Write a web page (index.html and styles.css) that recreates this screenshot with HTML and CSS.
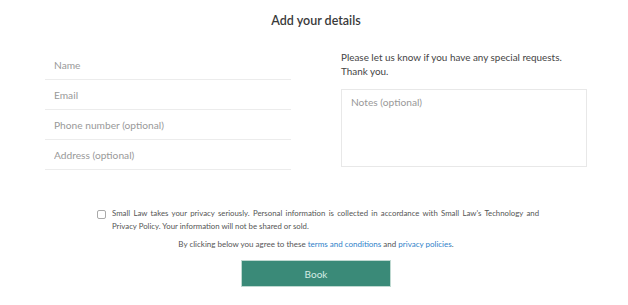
FILE: index.html
```html
<!DOCTYPE html>
<html lang="en">
<head>
    <meta charset="UTF-8">
    <meta name="viewport" content="width=device-width, initial-scale=1.0">
    <title>Add your details</title>
    <link rel="stylesheet" href="styles.css">
</head>
<body>

<div class="page">
    <h1 class="title">Add your details</h1>

    <div class="form-grid">
        <div class="fields">
            <input type="text" class="field" placeholder="Name">
            <input type="text" class="field" placeholder="Email">
            <input type="text" class="field" placeholder="Phone number (optional)">
            <input type="text" class="field" placeholder="Address (optional)">
        </div>
        <div class="notes">
            <p class="notes-intro">Please let us know if you have any special requests. Thank you.</p>
            <textarea class="notes-box" placeholder="Notes (optional)"></textarea>
        </div>
    </div>

    <label class="privacy">
        <input type="checkbox" class="privacy-check">
        <span class="privacy-text">Small Law takes your privacy seriously. Personal information is collected in accordance with Small Law's Technology and Privacy Policy. Your information will not be shared or sold.</span>
    </label>

    <p class="agree">By clicking below you agree to these <a href="#">terms and conditions</a> and <a href="#">privacy policies</a>.</p>

    <div class="actions">
        <button class="book-button">Book</button>
    </div>
</div>

</body>
</html>
```

FILE: styles.css
```css
body {
    font-family: Lato, "Open Sans", sans-serif;
    margin: 0;
    padding: 0;
    background-color: #fff;
    color: #444;
}
.page {
    padding: 13px 41px 0 45px;
}
.title {
    margin: 0;
    text-align: center;
    font-size: 12.5px;
    font-weight: 600;
    color: #3a3a3a;
    line-height: 16px;
}
.form-grid {
    display: grid;
    grid-template-columns: 246px 246px;
    column-gap: 50px;
    margin-top: 21px;
}
.fields {
    display: flex;
    flex-direction: column;
}
.field {
    height: 30px;
    box-sizing: border-box;
    border: none;
    border-bottom: 1px solid #ececec;
    padding: 0 9px;
    font-family: inherit;
    font-size: 10.2px;
    outline: none;
}
.field::placeholder,
.notes-box::placeholder {
    color: #999;
}
.notes-intro {
    margin: 0;
    font-size: 9.9px;
    line-height: 14px;
    color: #444;
}
.notes-box {
    display: block;
    width: 246px;
    height: 78px;
    box-sizing: border-box;
    margin-top: 11px;
    border: 1px solid #e8e8e8;
    padding: 6px 9px;
    font-family: inherit;
    font-size: 10.2px;
    resize: none;
    outline: none;
}
.privacy {
    display: flex;
    align-items: flex-start;
    width: 442px;
    margin: 37px 0 0 52px;
}
.privacy-check {
    appearance: none;
    width: 9px;
    height: 9px;
    margin: 3px 6px 0 0;
    border: 1px solid #aaa;
    border-radius: 2px;
    background-color: #fff;
    flex-shrink: 0;
}
.privacy-text {
    font-size: 7.8px;
    line-height: 13px;
    text-align: justify;
    color: #555;
}
.agree {
    margin: 5px 0 0;
    text-align: center;
    font-size: 8px;
    line-height: 12px;
    color: #555;
}
.agree a {
    color: #2f7fc9;
    text-decoration: none;
}
.actions {
    display: flex;
    justify-content: center;
    margin-top: 10px;
}
.book-button {
    width: 150px;
    height: 27px;
    border: 1px solid #bfd9d1;
    background-color: #3a8a78;
    color: #d4ece4;
    font-family: inherit;
    font-size: 10px;
    cursor: pointer;
}
```
